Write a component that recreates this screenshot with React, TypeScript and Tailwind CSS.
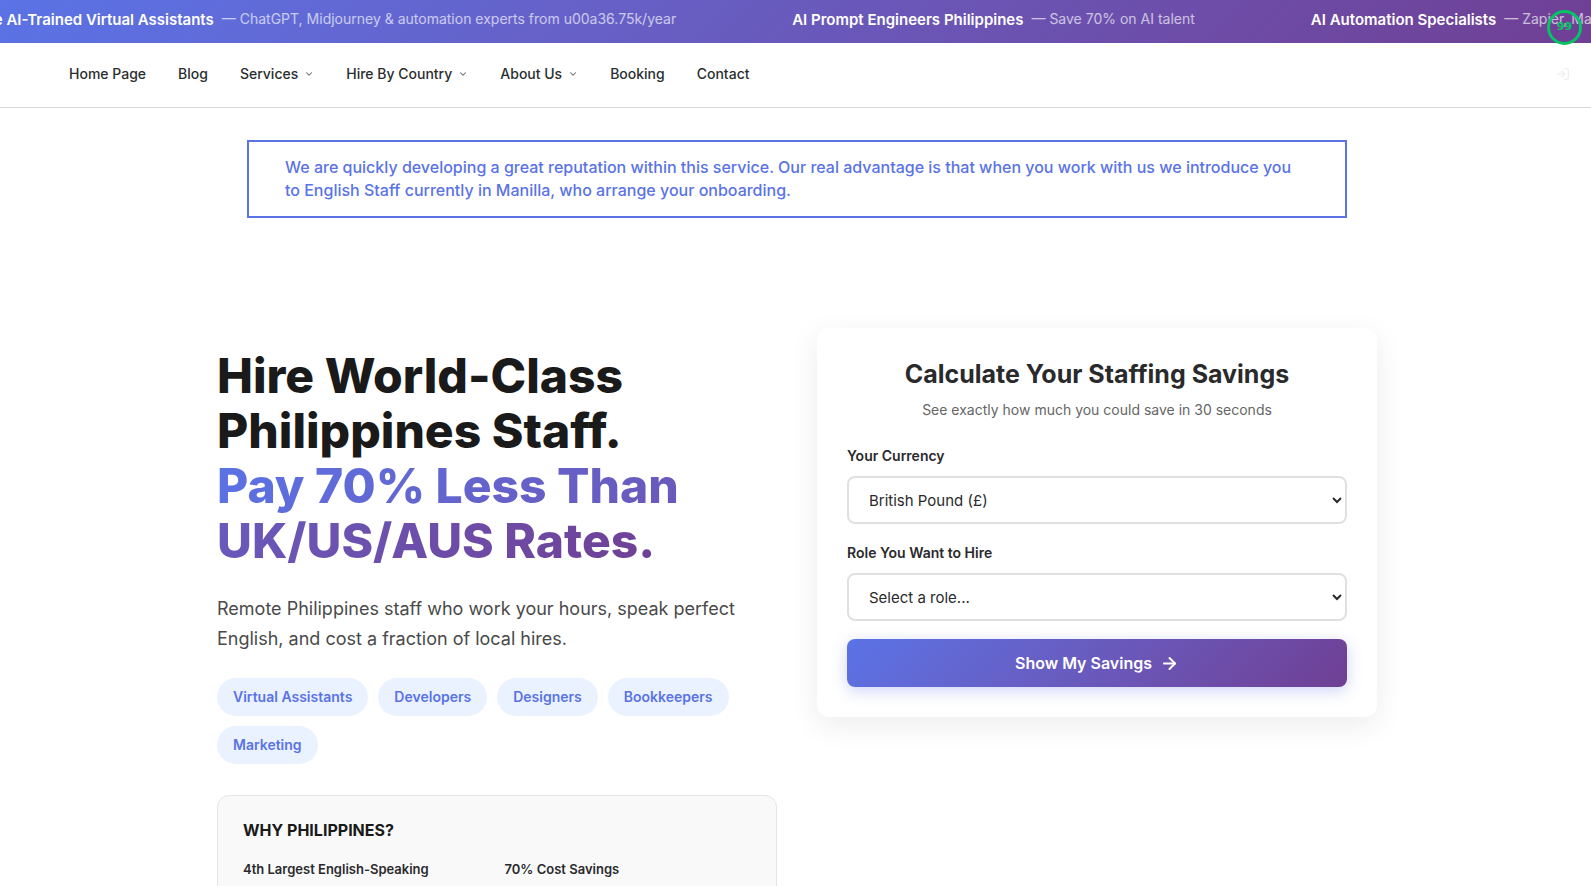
import { ArrowRight, ChevronDown, LogIn } from "lucide-react";

const announcements = [
  { title: "Hire AI-Trained Virtual Assistants", detail: "— ChatGPT, Midjourney & automation experts from u00a36.75k/year" },
  { title: "AI Prompt Engineers Philippines", detail: "— Save 70% on AI talent" },
  { title: "AI Automation Specialists", detail: "— Zapier, Make & workflow experts" },
];

const links = [
  { label: "Home Page" },
  { label: "Blog" },
  { label: "Services", menu: true },
  { label: "Hire By Country", menu: true },
  { label: "About Us", menu: true },
  { label: "Booking" },
  { label: "Contact" },
];

const roles = ["Virtual Assistants", "Developers", "Designers", "Bookkeepers", "Marketing"];

function Ticker() {
  return (
    <div className="flex h-[43px] items-center overflow-hidden bg-linear-135 from-[#5a73e6] to-[#6f3f94] pb-1">
      <div className="-ml-[27px] flex shrink-0 gap-[116px]">
        {announcements.map((item) => (
          <p key={item.title} className="flex shrink-0 items-center gap-2 text-sm whitespace-nowrap">
            <strong className="text-[15px] font-semibold text-white">{item.title}</strong>
            <span className="text-white/65">{item.detail}</span>
          </p>
        ))}
      </div>
    </div>
  );
}

function ScoreBadge() {
  return (
    <div className="absolute top-[10px] right-[9px] flex size-[35px] items-center justify-center rounded-full border-3 border-[#05c463] font-['DejaVu_Sans',sans-serif] text-[11px] font-bold text-[#05c463]">
      99
    </div>
  );
}

function Nav() {
  return (
    <nav className="flex h-[65px] items-center justify-between border-b border-[#d9d9d9] pr-[21px] pb-[2px] pl-[69px]">
      <ul className="flex items-center gap-8">
        {links.map((link) => (
          <li key={link.label}>
            <a href="#" className="flex items-center gap-[6px] text-sm font-medium text-[#2a2e2e]">
              {link.label}
              {link.menu && <ChevronDown size={10} strokeWidth={2.5} className="text-[#666]" />}
            </a>
          </li>
        ))}
      </ul>
      <a href="#" aria-label="Log in" className="text-[#ececec]">
        <LogIn size={14} />
      </a>
    </nav>
  );
}

function Field({ id, label, options }: { id: string; label: string; options: string[] }) {
  return (
    <div>
      <label htmlFor={id} className="mb-2 block text-sm leading-6 font-semibold text-[#2a2a2d]">
        {label}
      </label>
      <select id={id} className="h-12 w-full rounded-lg border-2 border-[#e0e0e0] bg-white px-4 text-[15px] text-[#2a2a2d]">
        {options.map((option) => (
          <option key={option}>{option}</option>
        ))}
      </select>
    </div>
  );
}

function Calculator() {
  return (
    <form className="rounded-xl bg-white p-[30px] shadow-[0_8px_30px_rgba(0,0,0,0.08)]">
      <h2 className="text-center text-[25px] leading-8 font-bold text-[#2a2a2d]">Calculate Your Staffing Savings</h2>
      <p className="mt-2 mb-[22px] text-center text-sm leading-6 text-[#666]">
        See exactly how much you could save in 30 seconds
      </p>
      <div className="flex flex-col gap-[17px]">
        <Field id="currency" label="Your Currency" options={["British Pound (£)", "US Dollar ($)", "Australian Dollar ($)"]} />
        <Field id="role" label="Role You Want to Hire" options={["Select a role...", ...roles]} />
      </div>
      <button
        type="button"
        className="mt-[18px] flex h-12 w-full items-center justify-center gap-2 rounded-lg bg-linear-135 from-[#5a73e6] to-[#6f3f94] text-base font-semibold text-white shadow-[0_4px_15px_rgba(90,115,230,0.3)]"
      >
        Show My Savings
        <ArrowRight size={19} strokeWidth={2.5} />
      </button>
    </form>
  );
}

export default function App() {
  return (
    <div className="relative h-screen overflow-hidden bg-white font-['Inter',sans-serif]">
      <Ticker />
      <ScoreBadge />
      <Nav />
      <main className="pl-[3px]">
        <p className="mx-auto mt-8 max-w-[1100px] border-2 border-[#5a73e6] px-9 py-[14px] text-base leading-[23px] font-medium text-[#5a73e6]">
          We are quickly developing a great reputation within this service. Our real advantage is that when you work with us we introduce you
          to English Staff currently in Manilla, who arrange your onboarding.
        </p>
        <section className="mx-auto mt-[110px] grid max-w-[1160px] grid-cols-2 items-start gap-10">
          <div className="pt-5">
            <h1 className="text-5xl leading-[55px] font-extrabold text-[#1a1a1a]">
              Hire World-Class
              <br />
              Philippines Staff.
              <br />
              <span className="bg-linear-135 from-[#5a73e6] to-[#6f3f94] bg-clip-text text-transparent">
                Pay 70% Less Than
                <br />
                UK/US/AUS Rates.
              </span>
            </h1>
            <p className="mt-[26px] text-lg leading-[30px] text-[#4a4a4a]">
              Remote Philippines staff who work your hours, speak perfect English, and cost a fraction of local hires.
            </p>
            <ul className="mt-6 flex flex-wrap gap-[10px]">
              {roles.map((role) => (
                <li key={role} className="rounded-full bg-[#ebf2ff] px-4 py-2 text-sm leading-[22px] font-semibold text-[#5a73e6]">
                  {role}
                </li>
              ))}
            </ul>
            <div className="mt-[31px] rounded-xl border border-[#e5e5e5] bg-[#f9f9f9] px-[25px] py-6">
              <h3 className="text-base leading-5 font-bold text-[#1a1a1a]">WHY PHILIPPINES?</h3>
              <ul className="mt-[19px] grid grid-cols-2 gap-[15px] text-[13px] leading-5 font-semibold text-[#2a2a2d]">
                <li>4th Largest English-Speaking</li>
                <li>70% Cost Savings</li>
              </ul>
            </div>
          </div>
          <Calculator />
        </section>
      </main>
    </div>
  );
}
